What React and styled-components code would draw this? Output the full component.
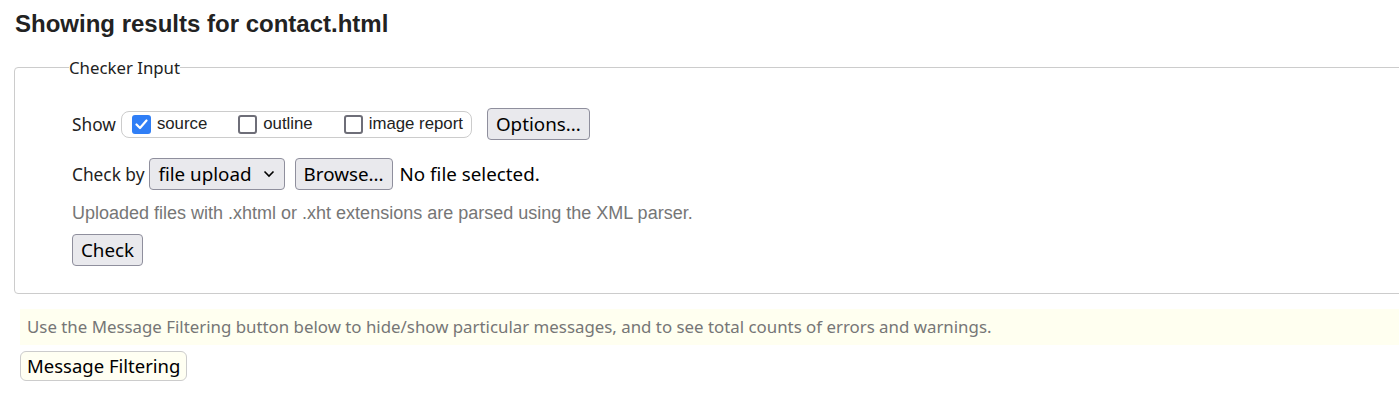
import React from 'react';
import styled, { createGlobalStyle } from 'styled-components';

const GlobalStyle = createGlobalStyle`
  html, body {
    margin: 0;
    padding: 0;
    background: #fff;
    overflow: hidden;
  }
  body {
    font-family: "Noto Sans", "Open Sans", sans-serif;
    color: #222;
  }
`;

const Page = styled.div`
  padding: 0 0 0 14px;
  width: 1440px;
`;

const Title = styled.h2`
  margin: 0;
  padding: 11px 0 0 1px;
  font-family: "Liberation Sans", Arial, sans-serif;
  font-size: 24px;
  font-weight: bold;
  color: #222;
  line-height: 25px;
`;

const Fieldset = styled.fieldset`
  margin: 20px 0 0 0;
  padding: 29px 57px 27px;
  border: 1px solid #ccc;
  border-radius: 4px;
  min-width: 0;
`;

const Legend = styled.legend`
  margin-left: -3px;
  padding: 0;
  font-size: 16.8px;
  color: #222;
`;

const Row = styled.div`
  display: flex;
  align-items: center;
  margin-top: ${(p) => p.top || 0}px;
  font-size: 17.3px;
`;

const Label = styled.span`
  margin-right: 5px;
`;

const Group = styled.div`
  display: flex;
  align-items: center;
  height: 25px;
  padding: 0 8px 0 10px;
  border: 1px solid #ccc;
  border-radius: 8px;
  margin-right: 15px;
`;

const Choice = styled.label`
  display: flex;
  align-items: center;
  font-family: "Liberation Sans", Arial, sans-serif;
  font-size: 16.8px;
  color: #222;
  margin-right: ${(p) => p.space || 0}px;
`;

const Box = styled.span`
  box-sizing: border-box;
  width: 19px;
  height: 19px;
  border-radius: 3px;
  margin-right: 6px;
  display: flex;
  align-items: center;
  justify-content: center;
  background: ${(p) => (p.checked ? '#2f7ef6' : '#fff')};
  border: ${(p) => (p.checked ? 'none' : '2.5px solid #6e6e78')};
`;

const Button = styled.button`
  font-family: "Noto Sans", "Open Sans", sans-serif;
  font-size: ${(p) => p.fs || 18.8}px;
  color: #000;
  background: ${(p) => (p.ivory ? '#fffff2' : '#e9e9ed')};
  border: 1px solid ${(p) => (p.ivory ? '#ccc' : '#8f8f9d')};
  border-radius: ${(p) => (p.ivory ? 6 : 4)}px;
  height: ${(p) => p.h || 32}px;
  padding: 0 ${(p) => p.px || 8}px;
  line-height: 1;
  margin-right: ${(p) => p.mr || 0}px;
`;

const Select = styled(Button)`
  display: flex;
  align-items: center;
  gap: 11px;
  padding: 0 9px 0 8px;
`;

const FileName = styled.span`
  font-size: 18.8px;
  color: #000;
`;

const Note = styled.p`
  margin: 13px 0 0;
  font-family: "Liberation Sans", Arial, sans-serif;
  font-size: 18px;
  line-height: 20px;
  color: #767676;
`;

const Info = styled.div`
  margin: 15px 0 0 6px;
  padding: 8px 7px;
  background: #fffff0;
  color: #767676;
  font-size: 16.85px;
  line-height: 20px;
`;

const Filter = styled.div`
  margin: 6px 0 0 6px;
`;

function Check({ checked }) {
  return (
    <Box checked={checked}>
      {checked && (
        <svg width="13" height="11" viewBox="0 0 13 11">
          <path d="M1.5 5.5 L5 9 L11.5 1.5" fill="none" stroke="#fff" strokeWidth="2.2" strokeLinecap="round" strokeLinejoin="round" />
        </svg>
      )}
    </Box>
  );
}

export default function App() {
  return (
    <>
      <GlobalStyle />
      <Page>
        <Title>Showing results for contact.html</Title>
        <Fieldset>
          <Legend>Checker Input</Legend>
          <Row>
            <Label>Show</Label>
            <Group>
              <Choice space={31}><Check checked />source</Choice>
              <Choice space={31}><Check />outline</Choice>
              <Choice><Check />image report</Choice>
            </Group>
            <Button>Options...</Button>
          </Row>
          <Row top={18}>
            <Label>Check by</Label>
            <Select mr={10}>
              file upload
              <svg width="12" height="8" viewBox="0 0 12 8">
                <path d="M1.5 1.5 L6 6 L10.5 1.5" fill="none" stroke="#000" strokeWidth="1.6" />
              </svg>
            </Select>
            <Button mr={7}>Browse...</Button>
            <FileName>No file selected.</FileName>
          </Row>
          <Note>Uploaded files with .xhtml or .xht extensions are parsed using the XML parser.</Note>
          <Row top={11}>
            <Button>Check</Button>
          </Row>
        </Fieldset>
        <Info>Use the Message Filtering button below to hide/show particular messages, and to see total counts of errors and warnings.</Info>
        <Filter>
          <Button ivory h={30} px={6} fs={18.5}>Message Filtering</Button>
        </Filter>
      </Page>
    </>
  );
}
